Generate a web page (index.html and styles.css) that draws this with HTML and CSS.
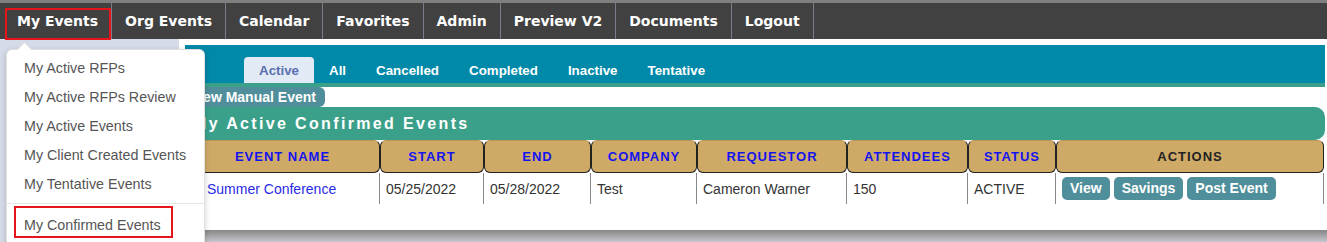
FILE: index.html
```html
<!DOCTYPE html>
<html>
<head>
<meta charset="utf-8">
<link rel="stylesheet" href="styles.css">
</head>
<body>
<div class="topstrip"></div>
<nav class="nav">
  <a class="nav-item nav-item--marked">My Events</a>
  <a class="nav-item">Org Events</a>
  <a class="nav-item">Calendar</a>
  <a class="nav-item">Favorites</a>
  <a class="nav-item">Admin</a>
  <a class="nav-item">Preview V2</a>
  <a class="nav-item">Documents</a>
  <a class="nav-item">Logout</a>
</nav>
<div class="main">
  <div class="panel">
    <div class="tabbar">
      <span class="tab tab--active">Active</span>
      <span class="tab">All</span>
      <span class="tab">Cancelled</span>
      <span class="tab">Completed</span>
      <span class="tab">Inactive</span>
      <span class="tab">Tentative</span>
    </div>
    <div class="toolbar"><span class="btn-new">New Manual Event</span></div>
    <div class="heading">My Active Confirmed Events</div>
    <div class="grid">
      <div class="th">EVENT NAME</div>
      <div class="th">START</div>
      <div class="th">END</div>
      <div class="th">COMPANY</div>
      <div class="th">REQUESTOR</div>
      <div class="th">ATTENDEES</div>
      <div class="th">STATUS</div>
      <div class="th th--plain">ACTIONS</div>
      <div class="td td--link">Summer Conference</div>
      <div class="td">05/25/2022</div>
      <div class="td">05/28/2022</div>
      <div class="td">Test</div>
      <div class="td">Cameron Warner</div>
      <div class="td">150</div>
      <div class="td">ACTIVE</div>
      <div class="td td--actions">
        <span class="btn">View</span>
        <span class="btn">Savings</span>
        <span class="btn">Post Event</span>
      </div>
    </div>
  </div>
  <div class="shade"></div>
</div>
<div class="dropdown">
  <div class="dd-item">My Active RFPs</div>
  <div class="dd-item">My Active RFPs Review</div>
  <div class="dd-item">My Active Events</div>
  <div class="dd-item">My Client Created Events</div>
  <div class="dd-item">My Tentative Events</div>
  <div class="dd-divider"></div>
  <div class="dd-item dd-item--marked">My Confirmed Events</div>
</div>
</body>
</html>
```

FILE: styles.css
```css
html, body {
  margin: 0;
  padding: 0;
}
body {
  background: #d5dbe8;
  font-family: "Liberation Sans", Arial, sans-serif;
  height: 242px;
  overflow: hidden;
  position: relative;
}
.topstrip {
  height: 3px;
  background: #7f7f7f;
}
.nav {
  display: flex;
  height: 36px;
  background: #414141;
  padding-left: 4px;
}
.nav-item {
  display: flex;
  align-items: center;
  padding: 0 13px;
  color: #fff;
  font: bold 14px "DejaVu Sans", Verdana, sans-serif;
  border-right: 1px solid #7b7b8c;
  position: relative;
}
.nav-item--marked::after {
  content: "";
  position: absolute;
  left: 1px;
  right: 0;
  top: 5px;
  bottom: -1px;
  border: 2px solid #e8141c;
}
.main {
  margin-left: 179px;
}
.panel {
  background: #fff;
  height: 191px;
  padding: 6px 2px 0 6px;
  box-sizing: border-box;
}
.tabbar {
  height: 42px;
  background: #0089a8;
  border-bottom: 4px solid #3aa08a;
  box-sizing: border-box;
  display: flex;
  align-items: flex-end;
  padding-left: 59px;
}
.tab {
  height: 26px;
  padding: 0 15px;
  display: flex;
  align-items: center;
  color: #fff;
  font-weight: bold;
  font-size: 13.33px;
}
.tab--active {
  background: #e2eaf5;
  color: #5b6fb1;
  border-radius: 4px 4px 0 0;
}
.toolbar {
  display: flex;
  height: 20px;
}
.btn-new {
  background: #4f8e9a;
  color: #fff;
  font-weight: bold;
  font-size: 14px;
  line-height: 20px;
  padding: 0 9px 0 8px;
  border-radius: 0 6px 6px 0;
}
.heading {
  height: 33px;
  line-height: 33px;
  background: #3ba08a;
  border-radius: 0 10px 10px 0;
  color: #fff;
  font-weight: bold;
  font-size: 16px;
  letter-spacing: 2.35px;
  padding-left: 8px;
}
.grid {
  display: grid;
  grid-template-columns: 195px 104px 107px 106px 150px 121px 88px 268px;
  grid-template-rows: 33px 31px;
}
.th {
  background: #cfaa67;
  border: 1px solid #222;
  border-top-color: #b8965a;
  border-radius: 6px;
  color: #1414ee;
  font-weight: bold;
  font-size: 13px;
  letter-spacing: 1px;
  display: flex;
  align-items: center;
  justify-content: center;
}
.th--plain {
  color: #222;
}
.td {
  border-right: 1px solid #888;
  padding-left: 6px;
  font-size: 14px;
  color: #333;
  display: flex;
  align-items: center;
}
.td--link {
  padding-left: 22px;
  color: #2a2ae6;
}
.td--actions {
  gap: 4px;
  padding-left: 6px;
}
.btn {
  background: #4f8f9b;
  color: #fff;
  font-weight: bold;
  font-size: 14px;
  height: 23px;
  line-height: 23px;
  padding: 0 8px;
  border-radius: 5px;
}
.shade {
  height: 12px;
  background: linear-gradient(#868686, #c6c6ce);
}
.dropdown {
  position: absolute;
  left: 6px;
  top: 49px;
  width: 199px;
  height: 210px;
  box-sizing: border-box;
  background: #fff;
  border: 1px solid rgba(0, 0, 0, 0.12);
  border-radius: 6px;
  box-shadow: 0 2px 6px rgba(0, 0, 0, 0.18);
  padding-top: 3px;
}
.dropdown::before {
  content: "";
  position: absolute;
  left: 12px;
  top: -6px;
  width: 10px;
  height: 10px;
  background: #fff;
  border-top: 1px solid rgba(0, 0, 0, 0.12);
  border-left: 1px solid rgba(0, 0, 0, 0.12);
  transform: rotate(45deg);
}
.dd-item {
  height: 29px;
  display: flex;
  align-items: center;
  padding-left: 17px;
  color: #555;
  font-size: 14.3px;
}
.dd-divider {
  margin-top: 5px;
  height: 1px;
  background: #e5e5e5;
}
.dd-item--marked {
  margin: 2px 0 0 7px;
  width: 159px;
  height: 32px;
  box-sizing: border-box;
  border: 2px solid #e8141c;
  padding: 6px 0 0 8px;
}
```
